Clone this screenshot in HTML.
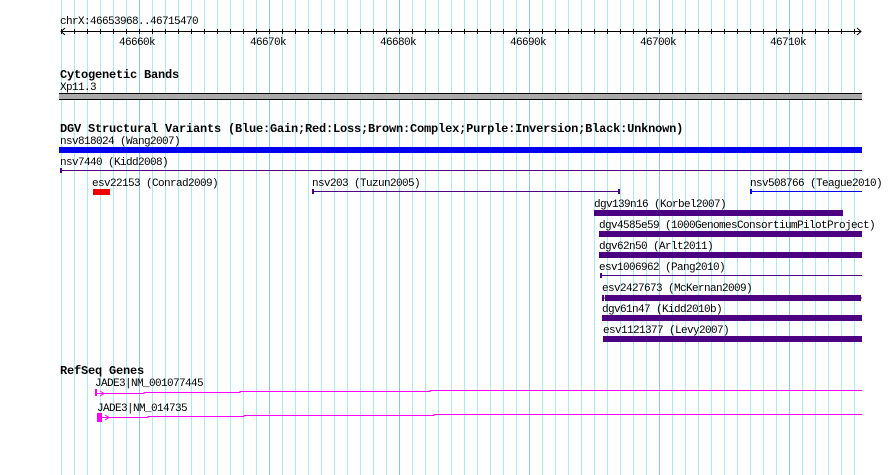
<!DOCTYPE html>
<html><head><meta charset="utf-8"><style>
html,body{margin:0;padding:0;background:#fff;width:890px;height:475px;overflow:hidden}
svg{display:block}
text{font-family:"Liberation Mono","DejaVu Sans Mono",monospace;font-size:11px;letter-spacing:-0.6px;fill:#000}
.b{font-weight:bold;font-size:12px;letter-spacing:-0.2px}
</style></head><body>
<svg id="s" width="890" height="475" xmlns="http://www.w3.org/2000/svg">
<g id="grid"></g>
<text x="60" y="24">chrX:46653968..46715470</text>
<line x1="61" y1="31.5" x2="861" y2="31.5" stroke="#000"/>
<path d="M65 28 L61 31.5 L65 35 M857 28 L861 31.5 L857 35" stroke="#000" fill="none"/>
<g id="ticks"></g>
<text x="119" y="45">46660k</text>
<text x="250" y="45">46670k</text>
<text x="380" y="45">46680k</text>
<text x="510" y="45">46690k</text>
<text x="640" y="45">46700k</text>
<text x="770" y="45">46710k</text>

<text class="b" x="60" y="78">Cytogenetic Bands</text>
<text x="60" y="90">Xp11.3</text>
<rect x="59" y="93" width="803" height="7" fill="#aaa"/>
<rect x="59" y="93" width="803" height="1" fill="#000"/>
<rect x="59" y="99" width="803" height="1" fill="#000"/>

<text class="b" x="60" y="132">DGV Structural Variants (Blue:Gain;Red:Loss;Brown:Complex;Purple:Inversion;Black:Unknown)</text>
<text x="60" y="144">nsv818024 (Wang2007)</text>
<rect x="59" y="147" width="803" height="6" fill="#0000ee"/>
<text x="60" y="165">nsv7440 (Kidd2008)</text>
<line x1="61" y1="170.5" x2="862" y2="170.5" stroke="#4b0082"/>
<rect x="60" y="168" width="2" height="5" fill="#4b0082"/>
<text x="92" y="186">esv22153 (Conrad2009)</text>
<rect x="93" y="189" width="17" height="6" fill="#ee0000"/>
<text x="312" y="186">nsv203 (Tuzun2005)</text>
<line x1="313" y1="191.5" x2="619" y2="191.5" stroke="#4b0082"/>
<rect x="312" y="189" width="2" height="5" fill="#4b0082"/><rect x="618" y="189" width="2" height="5" fill="#4b0082"/>
<text x="750" y="186">nsv508766 (Teague2010)</text>
<line x1="751" y1="191.5" x2="862" y2="191.5" stroke="#0000ee"/>
<rect x="750" y="189" width="2" height="5" fill="#0000ee"/>
<text x="594" y="207">dgv139n16 (Korbel2007)</text>
<rect x="594" y="210" width="249" height="6" fill="#4b0082"/>
<text x="599" y="228">dgv4585e59 (1000GenomesConsortiumPilotProject)</text>
<rect x="599" y="231" width="263" height="6" fill="#4b0082"/>
<text x="599" y="249">dgv62n50 (Arlt2011)</text>
<rect x="599" y="252" width="263" height="6" fill="#4b0082"/>
<text x="599" y="270">esv1006962 (Pang2010)</text>
<line x1="600" y1="275.5" x2="862" y2="275.5" stroke="#4b0082"/>
<rect x="600" y="273" width="2" height="5" fill="#4b0082"/>
<text x="602" y="291">esv2427673 (McKernan2009)</text>
<rect x="605" y="295" width="256" height="6" fill="#4b0082"/>
<line x1="602" y1="298" x2="862" y2="298" stroke="#4b0082"/>
<rect x="602" y="295" width="2" height="6" fill="#4b0082"/>
<text x="602" y="312">dgv61n47 (Kidd2010b)</text>
<rect x="602" y="315" width="260" height="6" fill="#4b0082"/>
<text x="603" y="333">esv1121377 (Levy2007)</text>
<rect x="603" y="336" width="259" height="6" fill="#4b0082"/>

<text class="b" x="60" y="374">RefSeq Genes</text>
<text x="95" y="386">JADE3|NM_001077445</text>
<rect x="95" y="389" width="2" height="7" fill="#ff00ff"/>
<path d="M97 393.5 H144 V392.5 H240 V391.5 H430 V390.5 H862" stroke="#ff00ff" fill="none"/>
<path d="M100 391 L104 393.5 L100 396" stroke="#ff00ff" fill="none"/>
<text x="97" y="411">JADE3|NM_014735</text>
<rect x="97" y="413" width="5" height="9" fill="#ff00ff"/>
<path d="M102 417.5 H148 V416.5 H244 V415.5 H434 V414.5 H862" stroke="#ff00ff" fill="none"/>
<path d="M105 415 L109 417.5 L105 420" stroke="#ff00ff" fill="none"/>
</svg>
<script>
var g=document.getElementById('grid'),t=document.getElementById('ticks'),ns='http://www.w3.org/2000/svg';
for(var k=46654;k<=46715;k++){var x=Math.round(659.3+(k-46700)*13.0)+0.5;
var l=document.createElementNS(ns,'line');l.setAttribute('x1',x);l.setAttribute('x2',x);l.setAttribute('y1',0);l.setAttribute('y2',475);
l.setAttribute('stroke',k%10==0?'#8cc8e8':'#aee8ef');g.appendChild(l);
var m=document.createElementNS(ns,'line');m.setAttribute('x1',x);m.setAttribute('x2',x);m.setAttribute('y1',29);m.setAttribute('y2',34);m.setAttribute('stroke','#000');t.appendChild(m);}
</script>
</body></html>
